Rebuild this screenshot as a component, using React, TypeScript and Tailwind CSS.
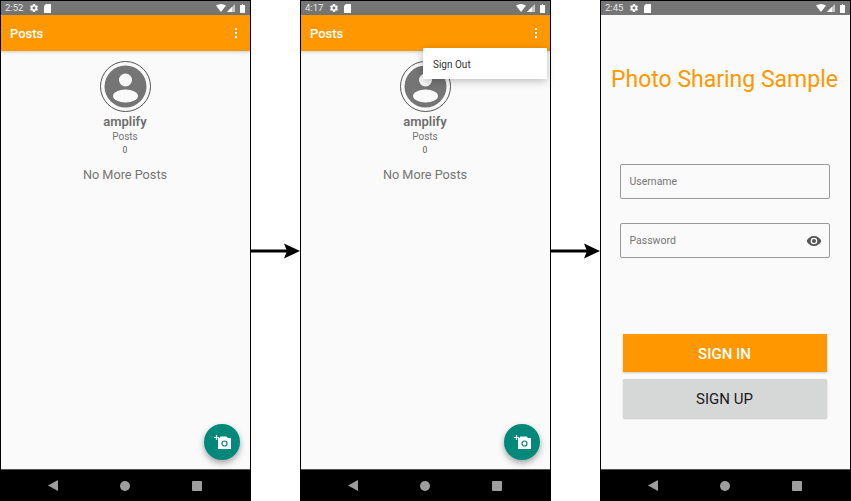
import { ReactNode } from 'react'

function Cog() {
  return (
    <svg width="10" height="10" viewBox="0 0 24 24" fill="#fff">
      <path d="M19.4 13a7.5 7.5 0 0 0 0-2l2.3-1.7-2.3-4-2.6 1.1a7.6 7.6 0 0 0-1.8-1L14.600 2.600H9.400L9 5.400a7.600 7.600 0 0 0-1.800 1L4.600 5.300l-2.300 4L4.600 11a7.500 7.500 0 0 0 0 2l-2.300 1.700 2.300 4 2.600-1.100c.6.4 1.200.8 1.800 1l.4 2.800h5.200l.4-2.800c.6-.2 1.200-.6 1.800-1l2.600 1.100 2.300-4zM12 15.500a3.500 3.500 0 1 1 0-7 3.500 3.500 0 0 1 0 7z" />
    </svg>
  )
}

function StatusBar({ time }: { time: string }) {
  return (
    <div className="flex h-[14px] shrink-0 items-center bg-[#757575] pl-[4px] pr-[5px] text-white">
      <span className="w-[20px] text-[9.500px] leading-none text-[#e8e8e8]">{time}</span>
      <div className="ml-[4px] flex">
        <Cog />
      </div>
      <svg className="ml-[5px]" width="7" height="9" viewBox="0 0 7 9" fill="#fff">
        <path d="M2 0h5v9H0V2z" />
      </svg>
      <div className="ml-auto flex items-center gap-[1px]">
        <svg width="10" height="8" viewBox="0 0 10 8" fill="#fff">
          <path d="M0 1.500Q5-1.500 10 1.500L5 8z" />
        </svg>
        <svg width="8" height="8" viewBox="0 0 8 8">
          <path d="M8 0v8H0z" fill="#c8c8c8" />
          <path d="M5 3v5H0z" fill="#fff" />
        </svg>
        <svg className="ml-[4px]" width="5" height="9" viewBox="0 0 5 9" fill="#fff">
          <path d="M1 1h1V0h1v1h2v8H0V1z" />
        </svg>
      </div>
    </div>
  )
}

function NavBar() {
  return (
    <div className="flex h-[32px] shrink-0 items-center justify-between border-t border-[#555555] bg-black pl-[47px] pr-[48px]">
      <svg width="10" height="11" viewBox="0 0 10 11" fill="#9e9e9e">
        <path d="M10 0v11L0 5.500z" />
      </svg>
      <div className="h-[10px] w-[10px] rounded-full bg-[#9e9e9e]" />
      <div className="h-[10px] w-[10px] rounded-[1px] bg-[#9e9e9e]" />
    </div>
  )
}

function Phone({ time, children }: { time: string; children: ReactNode }) {
  return (
    <div className="flex h-[501px] w-[251px] shrink-0 flex-col border-x border-t border-black bg-[#fafafa]">
      <StatusBar time={time} />
      <div className="relative flex min-h-0 flex-1 flex-col">{children}</div>
      <NavBar />
    </div>
  )
}

function Arrow() {
  return (
    <div className="flex h-[501px] w-[49px] shrink-0 items-center">
      <svg width="49" height="16" viewBox="0 0 49 16">
        <path d="M0 6.500h36v3H0z" fill="#000" />
        <path d="M33 0.500 49 8 33 15.500 36 8z" fill="#000" />
      </svg>
    </div>
  )
}

function PostsScreen() {
  return (
    <>
      <div className="flex h-[36px] shrink-0 items-center justify-between bg-[#ff9800] pl-[9px] pr-[13px] shadow-[0_1px_3px_rgba(0,0,0,0.2)]">
        <span className="pt-[2px] text-[13px] font-medium text-white">Posts</span>
        <div className="flex flex-col gap-[2px]">
          <div className="h-[2px] w-[2px] bg-white" />
          <div className="h-[2px] w-[2px] bg-white" />
          <div className="h-[2px] w-[2px] bg-white" />
        </div>
      </div>
      <div className="flex flex-col items-center pr-[1px] pt-[10px]">
        <div className="flex h-[51px] w-[51px] items-center justify-center rounded-full border border-[#555555]">
          <svg width="45" height="45" viewBox="0 0 45 45">
            <circle cx="22.500" cy="22.500" r="21" fill="#757575" />
            <circle cx="22.500" cy="16" r="6.500" fill="#fafafa" />
            <ellipse cx="22.500" cy="32" rx="12.500" ry="6.500" fill="#fafafa" />
          </svg>
        </div>
        <span className="mt-[2px] text-[13px] font-semibold leading-[16px] text-[#6e6e6e]">amplify</span>
        <span className="text-[10px] leading-[13px] text-[#757575]">Posts</span>
        <span className="mt-[1px] text-[8.500px] leading-[12px] text-[#555555]">0</span>
        <span className="mt-[11px] text-[12.700px] leading-[16px] text-[#757575]">No More Posts</span>
      </div>
      <button className="absolute left-[203px] top-[409px] flex h-[36px] w-[36px] items-center justify-center rounded-full bg-[#00897b] shadow-[0_3px_6px_rgba(0,0,0,0.35)]">
        <svg width="17" height="15" viewBox="0 0 17 15">
          <path d="M4 3h1.500l1-1.500h6L14 3h3v11H4z" fill="#fff" />
          <circle cx="10.500" cy="8.500" r="2.500" fill="none" stroke="#00897b" strokeWidth="1.200" />
          <path d="M2.500 0v5M0 2.500h5" stroke="#fff" strokeWidth="1.200" />
        </svg>
      </button>
    </>
  )
}

function Field({ label, eye }: { label: string; eye?: boolean }) {
  return (
    <div className="flex h-[35px] w-[210px] items-center justify-between rounded-[2px] border border-[#9a9a9a] pl-[9px] pr-[7px]">
      <span className="pt-[1px] text-[10.500px] text-[#757575]">{label}</span>
      {eye && (
        <svg width="16" height="16" viewBox="0 0 24 24" fill="#555555">
          <path d="M12 4.500C7 4.500 2.700 7.600 1 12c1.700 4.400 6 7.500 11 7.500s9.300-3.100 11-7.500c-1.700-4.400-6-7.500-11-7.500zM12 17a5 5 0 1 1 0-10 5 5 0 0 1 0 10zm0-8a3 3 0 1 0 0 6 3 3 0 0 0 0-6z" />
        </svg>
      )}
    </div>
  )
}

function SignInScreen() {
  return (
    <div className="flex flex-1 flex-col items-center pr-[2px]">
      <h1 className="mt-[50px] text-[23px] font-normal leading-[30px] text-[#ff9800]">Photo Sharing Sample</h1>
      <div className="mt-[69px]">
        <Field label="Username" />
      </div>
      <div className="mt-[24px]">
        <Field label="Password" eye />
      </div>
      <button className="mt-[76px] h-[38px] w-[204px] bg-[#ff9800] pt-[2px] text-[15px] font-medium text-white shadow-[0_1px_2px_rgba(0,0,0,0.2)]">
        SIGN IN
      </button>
      <button className="mt-[7px] h-[39px] w-[204px] rounded-[1px] bg-[#d6d7d7] pt-[2px] text-[15px] text-[#1a1a1a] shadow-[0_1px_2px_rgba(0,0,0,0.2)]">
        SIGN UP
      </button>
    </div>
  )
}

export default function App() {
  return (
    <div className="flex h-[501px] w-[851px] overflow-hidden bg-white font-['Roboto',sans-serif]">
      <Phone time="2:52">
        <PostsScreen />
      </Phone>
      <Arrow />
      <Phone time="4:17">
        <PostsScreen />
        <div className="absolute left-[122px] top-[33px] flex h-[31px] w-[124px] items-center bg-white pl-[10px] shadow-[0_2px_8px_rgba(0,0,0,0.25)]">
          <span className="pt-[1px] text-[10px] text-[#333333]">Sign Out</span>
        </div>
      </Phone>
      <Arrow />
      <Phone time="2:45">
        <SignInScreen />
      </Phone>
    </div>
  )
}
